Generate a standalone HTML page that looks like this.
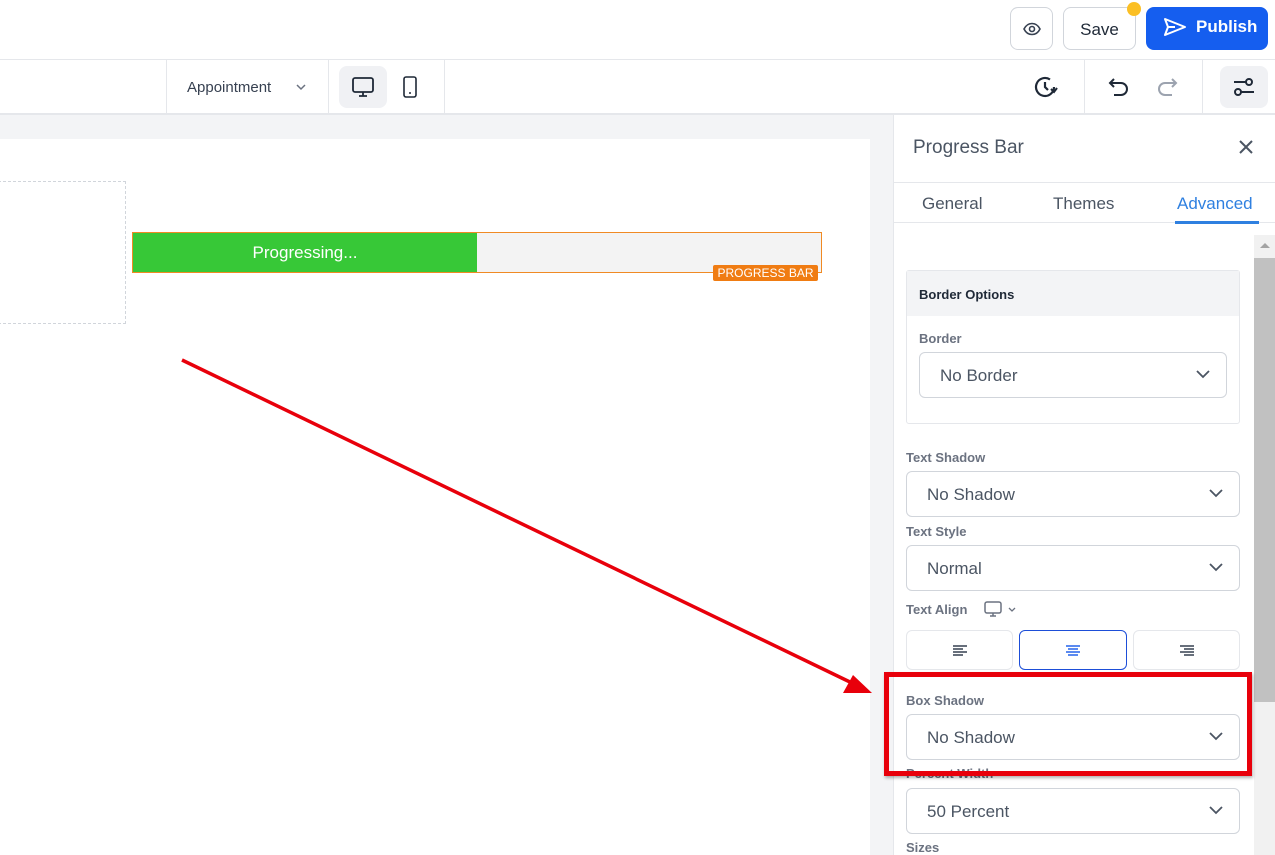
<!DOCTYPE html>
<html><head><style>
*{box-sizing:border-box;margin:0;padding:0}
body{width:1275px;height:855px;position:relative;overflow:hidden;font-family:"Liberation Sans",sans-serif;background:#f3f4f6;color:#374151}
.a{position:absolute}
.sel{position:absolute;left:906px;width:334px;height:46px;border:1px solid #d1d5db;border-radius:6px;background:#fff;font-size:17px;color:#4b5563;padding:13px 0 0 20px}
.sel svg{position:absolute;right:16px;top:17px}
.lbl{position:absolute;left:906px;font-size:13px;font-weight:bold;color:#6b7280}
.ab{position:absolute;top:630px;height:40px;border:1px solid #e5e7eb;border-radius:6px;background:#fff}
.ab svg{position:absolute;left:50%;top:13px;margin-left:-8px}
</style></head><body>
<!-- top bar -->
<div class="a" style="left:0;top:0;width:1275px;height:60px;background:#fff;border-bottom:1px solid #e5e7eb"></div>
<div class="a" style="left:1010px;top:7px;width:43px;height:43px;border:1px solid #d1d5db;border-radius:8px;background:#fff">
<svg class="a" style="left:12px;top:13px" width="18" height="16" viewBox="0 0 18 16"><path d="M1 8C3 4 6 2.5 9 2.5S15 4 17 8C15 12 12 13.5 9 13.5S3 12 1 8Z" fill="none" stroke="#374151" stroke-width="1.6"/><circle cx="9" cy="8" r="2.5" fill="none" stroke="#374151" stroke-width="1.6"/></svg></div>
<div class="a" style="left:1063px;top:7px;width:73px;height:43px;border:1px solid #d1d5db;border-radius:8px;background:#fff;font-size:17px;color:#1f2937;text-align:center;line-height:43px">Save</div>
<div class="a" style="left:1127px;top:2px;width:14px;height:14px;border-radius:50%;background:#fbbf24"></div>
<div class="a" style="left:1146px;top:7px;width:122px;height:43px;border-radius:8px;background:#155eef;color:#fff;font-size:17px;font-weight:bold;line-height:40px;padding-left:50px">Publish</div>
<svg class="a" style="left:1163px;top:17px" width="24" height="20" viewBox="0 0 24 20"><path d="M2 2L22 10L2 18L5 10Z M5 10H12" fill="none" stroke="#fff" stroke-width="2" stroke-linejoin="round"/></svg>
<!-- second bar -->
<div class="a" style="left:0;top:60px;width:1275px;height:55px;background:#fff;border-bottom:2px solid #e5e7eb"></div>
<div class="a" style="left:166px;top:60px;width:1px;height:54px;background:#e5e7eb"></div>
<div class="a" style="left:328px;top:60px;width:1px;height:54px;background:#e5e7eb"></div>
<div class="a" style="left:444px;top:60px;width:1px;height:54px;background:#e5e7eb"></div>
<div class="a" style="left:1084px;top:60px;width:1px;height:54px;background:#e5e7eb"></div>
<div class="a" style="left:1202px;top:60px;width:1px;height:54px;background:#e5e7eb"></div>
<div class="a" style="left:187px;top:79px;font-size:15px;color:#374151">Appointment</div>
<svg class="a" style="left:295px;top:83px" width="12" height="8"><path d="M2 2L6 6L10 2" fill="none" stroke="#6b7280" stroke-width="1.5"/></svg>
<div class="a" style="left:339px;top:66px;width:48px;height:42px;border-radius:8px;background:#f0f1f4"></div>
<svg class="a" style="left:352px;top:76px" width="22" height="22" viewBox="0 0 22 22"><rect x="1" y="2" width="20" height="14" rx="2" fill="none" stroke="#1f2937" stroke-width="1.8"/><path d="M7 20H15M11 16V20" stroke="#1f2937" stroke-width="1.8"/></svg>
<svg class="a" style="left:402px;top:76px" width="16" height="22" viewBox="0 0 16 22"><rect x="2" y="1" width="12" height="20" rx="2" fill="none" stroke="#1f2937" stroke-width="1.6"/><circle cx="8" cy="17" r="1" fill="#1f2937"/></svg>
<svg class="a" style="left:1034px;top:75px" width="24" height="24" viewBox="0 0 24 24"><path d="M20 12A9 9 0 1 1 16 4.5" fill="none" stroke="#1f2937" stroke-width="2.2"/><path d="M11 7V12L14 15" fill="none" stroke="#1f2937" stroke-width="2.2"/><path d="M17 14L20 17L23 13" fill="none" stroke="#1f2937" stroke-width="2"/></svg>
<svg class="a" style="left:1108px;top:77px" width="22" height="20" viewBox="0 0 22 20"><path d="M6 2L2 6L6 10M2 6H13A6 6 0 0 1 13 18H6" fill="none" stroke="#1f2937" stroke-width="2"/></svg>
<svg class="a" style="left:1156px;top:77px" width="22" height="20" viewBox="0 0 22 20"><path d="M16 2L20 6L16 10M20 6H9A6 6 0 0 0 9 18H16" fill="none" stroke="#9ca3af" stroke-width="2"/></svg>
<div class="a" style="left:1220px;top:66px;width:48px;height:42px;border-radius:8px;background:#f0f1f4"></div>
<svg class="a" style="left:1232px;top:77px" width="24" height="20" viewBox="0 0 24 20"><circle cx="17" cy="5" r="3" fill="none" stroke="#1f2937" stroke-width="2"/><path d="M2 5H14" stroke="#1f2937" stroke-width="2"/><circle cx="6" cy="15" r="3" fill="none" stroke="#1f2937" stroke-width="2"/><path d="M9 15H22" stroke="#1f2937" stroke-width="2"/></svg>
<!-- canvas -->
<div class="a" style="left:0;top:139px;width:870px;height:716px;background:#fff"></div>
<div class="a" style="left:-2px;top:181px;width:128px;height:143px;border:1px dashed #d1d5db"></div>
<div class="a" style="left:132px;top:232px;width:690px;height:41px;border:1px solid #f08a24;background:#f3f3f3"></div>
<div class="a" style="left:133px;top:233px;width:344px;height:39px;background:#37c837;color:#fff;font-size:17px;text-align:center;line-height:39px">Progressing...</div>
<div class="a" style="left:713px;top:265px;width:105px;height:16px;background:#f07c12;color:#fff;font-size:12px;line-height:16px;text-align:center;border-radius:2px">PROGRESS BAR</div>
<!-- panel -->
<div class="a" style="left:893px;top:115px;width:382px;height:740px;background:#fff;border-left:1px solid #e5e7eb"></div>
<div class="a" style="left:913px;top:137px;font-size:19px;color:#4b5563">Progress Bar</div>
<svg class="a" style="left:1238px;top:139px" width="16" height="16"><path d="M2 2L14 14M14 2L2 14" stroke="#4b5563" stroke-width="2"/></svg>
<div class="a" style="left:894px;top:182px;width:381px;height:1px;background:#e5e7eb"></div>
<div class="a" style="left:894px;top:222px;width:381px;height:1px;background:#e5e7eb"></div>
<div class="a" style="left:922px;top:194px;font-size:17px;color:#4b5563">General</div>
<div class="a" style="left:1053px;top:194px;font-size:17px;color:#4b5563">Themes</div>
<div class="a" style="left:1177px;top:194px;font-size:17px;color:#2f80e0">Advanced</div>
<div class="a" style="left:1175px;top:221px;width:84px;height:3px;background:#2f80e0"></div>
<!-- scrollbar -->
<div class="a" style="left:1254px;top:235px;width:21px;height:620px;background:#f1f1f1"></div>
<div class="a" style="left:1254px;top:258px;width:21px;height:444px;background:#c1c1c1"></div>
<svg class="a" style="left:1259px;top:241px" width="12" height="8"><path d="M1 7L6 2L11 7Z" fill="#a3a3a3"/></svg>
<!-- border options -->
<div class="a" style="left:906px;top:270px;width:334px;height:154px;border:1px solid #e5e7eb;border-radius:3px;background:#fff"></div>
<div class="a" style="left:907px;top:271px;width:332px;height:45px;background:#f3f4f6"></div>
<div class="a" style="left:919px;top:287px;font-size:13px;font-weight:bold;color:#1f2937">Border Options</div>
<div class="lbl" style="left:919px;top:331px">Border</div>
<div class="sel" style="left:919px;top:352px;width:308px">No Border<svg width="14" height="9"><path d="M1 1L7 7L13 1" fill="none" stroke="#4b5563" stroke-width="1.8"/></svg></div>
<div class="lbl" style="top:450px">Text Shadow</div>
<div class="sel" style="top:471px">No Shadow<svg width="14" height="9"><path d="M1 1L7 7L13 1" fill="none" stroke="#4b5563" stroke-width="1.8"/></svg></div>
<div class="lbl" style="top:524px">Text Style</div>
<div class="sel" style="top:545px">Normal<svg width="14" height="9"><path d="M1 1L7 7L13 1" fill="none" stroke="#4b5563" stroke-width="1.8"/></svg></div>
<div class="lbl" style="top:602px">Text Align</div>
<svg class="a" style="left:984px;top:601px" width="36" height="17" viewBox="0 0 36 17"><rect x="1" y="1" width="16" height="11" rx="2" fill="none" stroke="#6b7280" stroke-width="1.5"/><path d="M6 15H12M9 12V15" stroke="#6b7280" stroke-width="1.5"/><path d="M25 7L28 10L31 7" fill="none" stroke="#6b7280" stroke-width="1.3"/></svg>
<div class="ab" style="left:906px;width:107px"><svg width="16" height="14"><path d="M1 2H15M1 5H11M1 8H15M1 11H11" stroke="#374151" stroke-width="1.6"/></svg></div>
<div class="ab" style="left:1019px;width:108px;border-color:#1d4ed8"><svg width="16" height="14"><path d="M1 2H15M3 5H13M1 8H15M3 11H13" stroke="#2563eb" stroke-width="1.6"/></svg></div>
<div class="ab" style="left:1133px;width:107px"><svg width="16" height="14"><path d="M1 2H15M5 5H15M1 8H15M5 11H15" stroke="#374151" stroke-width="1.6"/></svg></div>
<div class="lbl" style="top:693px">Box Shadow</div>
<div class="sel" style="top:714px">No Shadow<svg width="14" height="9"><path d="M1 1L7 7L13 1" fill="none" stroke="#4b5563" stroke-width="1.8"/></svg></div>
<div class="lbl" style="top:766px">Percent Width</div>
<div class="sel" style="top:788px">50 Percent<svg width="14" height="9"><path d="M1 1L7 7L13 1" fill="none" stroke="#4b5563" stroke-width="1.8"/></svg></div>
<div class="lbl" style="top:840px">Sizes</div>
<!-- annotation -->
<div class="a" style="left:884px;top:672px;width:368px;height:104px;border:5px solid #e8000b;box-shadow:1px 2px 3px rgba(0,0,0,.3)"></div>
<svg class="a" style="left:0;top:0" width="1275" height="855"><line x1="182" y1="360" x2="852" y2="683" stroke="#e8000b" stroke-width="3.5"/><path d="M872 693L843 693L853 675Z" fill="#e8000b"/></svg>
</body></html>
